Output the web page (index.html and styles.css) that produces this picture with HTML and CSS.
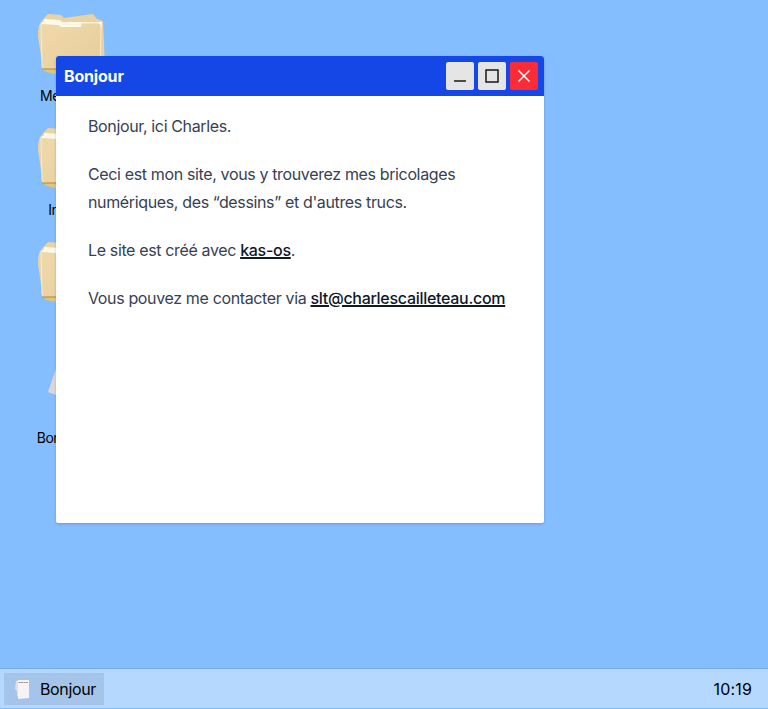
FILE: index.html
```
<!DOCTYPE html>
<html lang="fr">
<head>
<meta charset="utf-8">
<title>Bonjour</title>
<link rel="stylesheet" href="styles.css">
</head>
<body>
<svg class="defs" width="0" height="0">
  <defs>
    <linearGradient id="paper" x1="0" y1="0" x2="1" y2="1"><stop offset="0" stop-color="#efd9ab"/><stop offset=".55" stop-color="#ebd2a2"/><stop offset="1" stop-color="#e8cb95"/></linearGradient>
    <symbol id="folder" viewBox="0 0 72 72">
      <path fill="#ead2a3" d="M10 8 L12 6 25 7 28 10 42 8 57 6 61 11 67 13 69 58 62 63 10 60 6 48 2 24 4 15Z"/>
      <path fill="#fff9eb" d="M8 11 24 12 26 14 66 14 65 24 7 20Z"/>
      <path fill="#e9d3a6" d="M3 17 13 16 12 62 8 62 5 48 2 28Z"/>
      <path fill="url(#paper)" stroke="#f8ebcf" stroke-width="1" d="M5 16 Q6 14 10 15 L25 17 45 17 46 15 61 15 Q65 15 65 19 L64 64 Q63 66 60 66 L10 62 Q6 61 6 58Z"/>
      <path fill="#fffaf0" d="M6 14 25 15 26 17 45 17 45 19 25 19 23 17 6 16Z"/>
      <path fill="#e2c577" d="M6 61 22 61 25 63 19 66 11 64Z"/>
      <path fill="none" stroke="#b78829" stroke-width="1" d="M6 61 23 61"/>
    </symbol>
  </defs>
</svg>
<main class="desktop">
  <div class="icons">
    <div class="icon"><svg class="art"><use href="#folder"/></svg><span>Messages</span></div>
    <div class="icon"><svg class="art"><use href="#folder"/></svg><span>Internet</span></div>
    <div class="icon"><svg class="art"><use href="#folder"/></svg><span>Jeu</span></div>
    <div class="icon"><svg class="art" viewBox="0 0 72 72"><path fill="#e0d5d6" d="M23 10 53 18 48 55 12 42Z"/></svg><span>Bonjour.md</span></div>
  </div>
  <section class="window">
    <header class="titlebar">
      <h1>Bonjour</h1>
      <div class="controls">
        <button aria-label="Réduire"><svg viewBox="0 0 28 28"><path d="M8 19H20"/></svg></button>
        <button aria-label="Agrandir"><svg viewBox="0 0 28 28"><path d="M8 8H20V20H8Z"/></svg></button>
        <button class="close" aria-label="Fermer"><svg viewBox="0 0 28 28"><path d="M8.5 8.5 19.5 19.5M19.5 8.5 8.5 19.5"/></svg></button>
      </div>
    </header>
    <div class="content">
      <p>Bonjour, ici Charles.</p>
      <p>Ceci est mon site, vous y trouverez mes bricolages<br>numériques, des “dessins” et d'autres trucs.</p>
      <p>Le site est créé avec <a href="#">kas-os</a>.</p>
      <p>Vous pouvez me contacter via <a href="#">slt@charlescailleteau.com</a></p>
    </div>
  </section>
</main>
<footer class="taskbar">
  <button class="task"><svg viewBox="0 0 24 24"><path fill="#e6dee0" d="M4 4 7 3V20L5 19V14L3 12Z"/><path fill="#f5f3f4" d="M6 3 17 3 17 21 6 22Z"/><path fill="none" stroke="#887c7d" stroke-width=".8" stroke-dasharray="2 .5" d="M6.5 5.5 16.5 5.5"/></svg><span>Bonjour</span></button>
  <time>10:19</time>
</footer>
</body>
</html>
```
FILE: styles.css
```
* { box-sizing: border-box; }
body {
  margin: 0;
  height: 709px;
  overflow: hidden;
  display: flex;
  flex-direction: column;
  background: #85beff;
  font-family: Inter, "Liberation Sans", sans-serif;
  font-size: 16px;
  color: #000;
}
.defs { position: absolute; }
.desktop { position: relative; flex: 1; }
.icons { width: 144px; padding-top: 8px; display: flex; flex-direction: column; }
.icon {
  height: 114px;
  display: flex;
  flex-direction: column;
  align-items: center;
  font-size: 14px;
  line-height: 20px;
  letter-spacing: -0.45px;
}
.art { width: 72px; height: 72px; margin-bottom: 6px; }
.window {
  position: absolute;
  left: 56px;
  top: 56px;
  width: 488px;
  height: 467px;
  background: #fff;
  border-radius: 3px 3px 2px 2px;
  box-shadow: 0 1px 3px rgba(0, 0, 0, .2);
  overflow: hidden;
}
.titlebar {
  height: 40px;
  padding: 0 6px 0 8px;
  display: flex;
  align-items: center;
  justify-content: space-between;
  background: #1447e6;
  color: #fff;
}
h1 { margin: 0; font-size: 16px; font-weight: 700; letter-spacing: -0.18px; }
.controls { display: flex; gap: 4px; }
.controls button {
  width: 28px;
  height: 28px;
  padding: 0;
  border: 0;
  border-radius: 2px;
  background: #e5e5e5;
  color: #171717;
}
.controls .close { background: #fb2c36; color: #fff; }
.controls svg { display: block; width: 28px; height: 28px; fill: none; stroke: currentColor; stroke-width: 1.5; }
.content { padding: 16px 32px; color: #364153; line-height: 28px; letter-spacing: -0.36px; white-space: nowrap; }
p { margin: 0 0 20px; }
a {
  color: #101828;
  font-weight: 500;
  letter-spacing: -0.29px;
  text-decoration: underline;
  text-decoration-thickness: 1.5px;
}
.taskbar {
  height: 41px;
  padding: 0 16px 0 4px;
  display: flex;
  align-items: center;
  justify-content: space-between;
  border-top: 1px solid #72ace9;
  border-bottom: 1px solid #85beff;
  background: #b5d8ff;
}
.task {
  width: 100px;
  height: 32px;
  padding: 0 8px;
  display: flex;
  align-items: center;
  gap: 4px;
  border: 0;
  background: #a4c5e9;
  color: #000;
  font: inherit;
  letter-spacing: -0.35px;
}
.task svg { width: 24px; height: 24px; flex: none; }
time { letter-spacing: 0.15px; }
```
